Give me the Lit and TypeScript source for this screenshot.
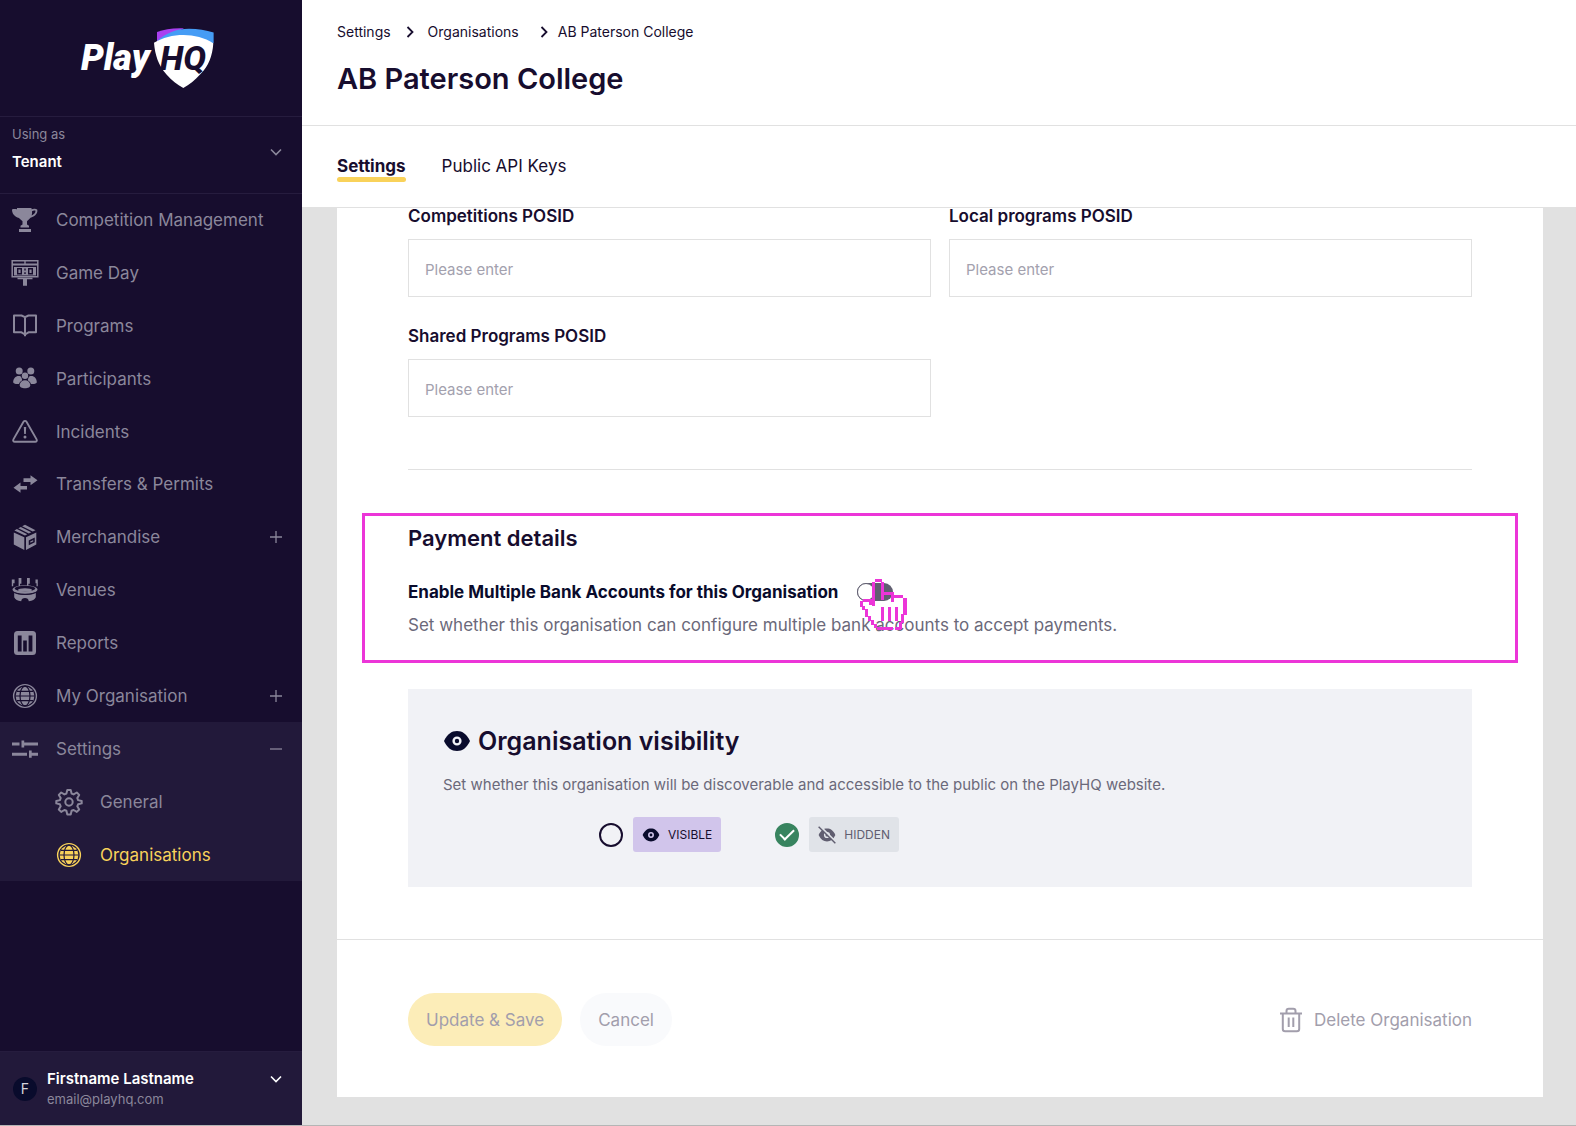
import { LitElement, html, svg, css, nothing, type TemplateResult } from 'lit';
import { customElement, property } from 'lit/decorators.js';
import { classMap } from 'lit/directives/class-map.js';

const globe = svg`
  <circle cx="14" cy="14" r="11.4" fill="none" stroke="currentColor" stroke-width="1.4"/>
  <circle cx="14" cy="14" r="9.4" fill="currentColor"/>
  <g fill="none" stroke="var(--icon-gap)" stroke-width="1.2">
    <ellipse cx="14" cy="14" rx="5" ry="9.8"/>
    <path d="M4 14h20M6 9.4h16M6 18.6h16"/>
  </g>`;

const icons: Record<string, TemplateResult> = {
  trophy: svg`
    <path fill="currentColor" d="M6 2h14.5v1.2c2-.9 4.500-.6 5.700.3.900 3-1.200 6.500-6.700 8.300-1.300 1.600-2.700 2.500-3.500 3.500v3.200l2 1.200v1.800H9.500v-1.800l2-1.200v-3.200c-.9-1.300-2.200-2-3.500-3.300C3.500 10.500.9 7.500 1 3.400c1.500-.7 3-.6 5-.2z"/>
    <path fill="var(--icon-gap)" d="M21 5.200c1.400-.8 2.700-.9 3.500-.4 0 2-1.400 3.600-3.900 4.700.5-1.200.6-2.600.4-4.300z"/>
    <path fill="currentColor" d="M8 23h12v3H8z"/>`,
  scoreboard: svg`
    <path fill="none" stroke="currentColor" stroke-width="1.500" d="M1.200 1.800h25.600v16H1.200z"/>
    <path fill="currentColor" d="M1 4.600h26v2H1zM13.300 2h1.400v4h-1.400zM3 8h22v8.400H3zM6.500 18.800h15v1.500H16v6.400h-4v-6.400H6.500z"/>
    <g fill="none" stroke="var(--icon-gap)" stroke-width="1.400">
      <path d="M6.700 9.800h3.600v5H6.700zM17.700 9.800h3.600v5h-3.600zM14 9.600v1.800M14 13.200V15"/>
    </g>`,
  book: svg`
    <path fill="none" stroke="currentColor" stroke-width="2" stroke-linejoin="round" d="M3 3.500h7.500L14 5.200l3.500-1.700H25v16.800h-7.500L14 22.500l-3.500-2.200H3zM14 5.200v19"/>`,
  people: svg`
    <g fill="currentColor">
      <circle cx="8.200" cy="6" r="3.500"/><circle cx="19.800" cy="6" r="3.500"/>
      <path d="M2.200 17.200c0-3.600 2.400-6.200 5.400-6.200 1.700 0 2.300.4 2.700 1.300.6 2 1.400 2.700.3 3.500-1.500 1-2.200 1.900-2.500 3.100-3.400.2-5.900-.2-5.900-1.700zM25.800 17.200c0-3.600-2.400-6.200-5.400-6.200-1.700 0-2.300.4-2.700 1.300-.6 2-1.400 2.700-.3 3.500 1.500 1 2.200 1.900 2.500 3.100 3.400.2 5.900-.2 5.900-1.700z"/>
      <circle cx="14" cy="10.800" r="3.200"/>
      <path d="M8.700 20c.4-3.200 2.500-4.800 5.300-4.800s4.900 1.600 5.300 4.800c.3 2-2.300 3.300-5.300 3.300S8.400 22 8.700 20z"/>
    </g>`,
  alert: svg`
    <path fill="none" stroke="currentColor" stroke-width="1.900" stroke-linejoin="round" d="M12.500 3.800 2.400 21.400c-.7 1.300 0 2.400 1.400 2.400h20.400c1.400 0 2.100-1.100 1.400-2.400L15.500 3.800c-.8-1.300-2.200-1.300-3 0z"/>
    <path fill="currentColor" d="M12.800 9h2.400l-.4 7h-1.600z"/><circle cx="14" cy="19" r="1.500" fill="currentColor"/>`,
  transfer: svg`
    <path fill="currentColor" d="M12.500 8.300h7V5.200l7 5-7 5v-3.100h-7zM16 15.900v3.600H9.500v3.200l-7-5 7-5.200v3.400z"/>`,
  box: svg`
    <g fill="currentColor">
      <path d="m2.800 9.500 10.500 4.800V27L2.800 21.500zM15 14.300l10.300-4.800v12L15 27z"/>
      <path d="m14 1.800 10.500 5.400-2.700 1.300-10.700-5.300zM9.800 4l10.500 5.200-2.500 1.300L7.300 5.200zM5.900 6l10.400 5.300L14 12.600 3.400 7.400z"/>
    </g>
    <path fill="none" stroke="var(--icon-gap)" stroke-width="1.500" d="m18.500 18 4.500-2.200v3l-4.500 2.200z"/>`,
  stadium: svg`
    <g fill="currentColor">
      <path d="M.8 3.500h2.800v3.700H2.200v3H.8zM7.600 2h2.800v5.800H9v3H7.600zM16 2h2.800v5.800h-1.400v3H16zM24.500 3.500h2.300v6.700h-1.300V7.200h-1z"/>
      <path d="M3.200 16.500c2.200 1.500 6 2.300 10.800 2.300s8.600-.8 10.800-2.300v4.700c-1 2.300-3.300 3.600-7 4-.3-2-1.600-3.200-3.800-3.200s-3.500 1.200-3.800 3.200c-3.700-.4-6-1.700-7-4z"/>
      <ellipse cx="14" cy="13.500" rx="12.500" ry="4.300"/>
    </g>
    <ellipse cx="14" cy="12.600" rx="10.400" ry="2.800" fill="var(--icon-gap)"/>
    <ellipse cx="14" cy="14" rx="7" ry="1.700" fill="currentColor"/>
    <path fill="none" stroke="var(--icon-gap)" stroke-width=".8" d="M2.500 16.200c2.600 1.600 6.500 2.300 11.500 2.300s8.900-.7 11.500-2.300"/>`,
  chart: svg`
    <rect x="3" y="2" width="22" height="24" rx="3.500" fill="currentColor"/>
    <path fill="var(--icon-gap)" d="M6.800 6.500h3.800v16H6.800zM12.200 11.500h3.600v11h-3.600zM17.600 6.500h3.800v16h-3.800z"/>`,
  globe,
  sliders: svg`
    <path fill="currentColor" d="M1 7.500h7.500v3H1zM10.500 5.400h2.700v2.100H27v3H13.200v2h-2.700zM1 17.700h15v3H1zM18 15.600h2.700v2.100H27v3h-6.300v2H18z"/>`,
  gear: svg`
    <path fill="none" stroke="currentColor" stroke-width="2" stroke-linejoin="round" d="M12.300 2h3.400l.9 3.600 2 .8 3.200-1.900 2.400 2.400-1.900 3.200.8 2 3.600.9v2.400l-3.600.9-.8 2 1.900 3.200-2.400 2.400-3.200-1.900-2 .8-.9 3.600h-3.400l-.9-3.600-2-.8-3.200 1.900-2.400-2.400 1.900-3.200-.8-2-3.600-.9v-2.400l3.600-.9.8-2-1.900-3.200 2.400-2.400 3.200 1.900 2-.8z"/>
    <circle cx="14" cy="14" r="3.700" fill="none" stroke="currentColor" stroke-width="2"/>`,
  down: svg`<path fill="none" stroke="currentColor" stroke-width="1.600" d="m9 11.500 5 5 5-5"/>`,
  right: svg`<path fill="none" stroke="currentColor" stroke-width="1.800" d="m11.500 9 5 5-5 5"/>`,
  plus: svg`<path fill="none" stroke="currentColor" stroke-width="1.300" d="M8 14h12M14 8v12"/>`,
  minus: svg`<path fill="none" stroke="currentColor" stroke-width="1.300" d="M8 14h12"/>`,
  eye: svg`
    <path fill="currentColor" d="M14 4c5.500 0 9.600 3 13 10-3.400 7-7.500 10-13 10S4.400 21 1 14C4.400 7 8.500 4 14 4z"/>
    <circle cx="14" cy="14" r="3.400" fill="none" stroke="var(--icon-gap)" stroke-width="2.400"/>`,
  eyeOff: svg`
    <path fill="currentColor" d="M14 4c5.500 0 9.600 3 13 10-3.400 7-7.500 10-13 10S4.400 21 1 14C4.400 7 8.500 4 14 4z"/>
    <circle cx="14" cy="14" r="3.600" fill="none" stroke="var(--icon-gap)" stroke-width="2.400"/>
    <path fill="none" stroke="var(--icon-gap)" stroke-width="3" d="M3 0l25 25"/>
    <path fill="none" stroke="currentColor" stroke-width="2.200" d="M1 1l26 26"/>`,
  bin: svg`
    <g fill="none" stroke="currentColor" stroke-width="2" stroke-linejoin="round">
      <path d="M3 7.500h22M5.800 7.500V23c0 1.500.8 2.300 2.300 2.300h11.800c1.500 0 2.300-.8 2.300-2.300V7.500M9.500 7V5c0-1.500.8-2.300 2.300-2.300h4.400c1.500 0 2.300.8 2.300 2.300v2M11.700 11.500V21M16.300 11.500V21"/>
    </g>`,
};

@customElement('ui-icon')
class UiIcon extends LitElement {
  static styles = css`
    :host { display: inline-flex; flex: none; width: 28px; height: 28px; }
    svg { display: block; width: 100%; height: 100%; }
  `;
  @property() name = '';
  render() {
    return html`<svg viewBox="0 0 28 28" aria-hidden="true">${icons[this.name]}</svg>`;
  }
}

interface NavItem { label: string; icon: string; expands?: boolean }

const NAV: NavItem[] = [
  { label: 'Competition Management', icon: 'trophy' },
  { label: 'Game Day', icon: 'scoreboard' },
  { label: 'Programs', icon: 'book' },
  { label: 'Participants', icon: 'people' },
  { label: 'Incidents', icon: 'alert' },
  { label: 'Transfers & Permits', icon: 'transfer' },
  { label: 'Merchandise', icon: 'box', expands: true },
  { label: 'Venues', icon: 'stadium' },
  { label: 'Reports', icon: 'chart' },
  { label: 'My Organisation', icon: 'globe', expands: true },
];

@customElement('side-bar')
class SideBar extends LitElement {
  static styles = css`
    :host {
      --icon-gap: #170d2e;
      display: flex; flex-direction: column;
      background: #170d2e; color: #8b879b;
      font-size: 17px; line-height: 24px;
    }
    button { font: inherit; color: inherit; background: none; border: 0; margin: 0; text-align: left; cursor: pointer; }
    a { color: inherit; text-decoration: none; }
    ul { list-style: none; margin: 0; padding: 0; }
    .logo { display: flex; justify-content: center; padding: 22px 6px 22px 0; border-bottom: 1px solid #261c3e; }
    .logo svg { display: block; width: 144px; height: 72px; }
    .play { font: italic 900 36px Roboto, "Liberation Sans", sans-serif; fill: #fff; }
    .hq { font: italic 800 34px Roboto, "Liberation Sans", sans-serif; fill: #170d2e; }
    .tenant {
      display: flex; align-items: center; width: 100%; padding: 5px 12px 19px;
      border-bottom: 1px solid #261c3e; justify-content: space-between;
    }
    .tenant-text { display: grid; gap: 4px; }
    .small { font-size: 13px; }
    .strong { font-size: 15px; font-weight: 600; color: #fff; }
    .tenant ui-icon { margin-top: 8px; }
    .main { display: grid; grid-template-rows: repeat(10, 1fr); height: 528px; }
    .row { display: flex; align-items: center; box-sizing: border-box; width: 100%; height: 100%; padding: 0 12px 0 11px; gap: 17px; }
    .grow { flex: 1; }
    .group { background: #22193a; --icon-gap: #22193a; }
    .group li { height: 53px; }
    .sub { padding-left: 55px; }
    .current { color: #f9d25a; }
    .user {
      display: flex; align-items: center; margin-top: auto; padding: 17px 12px 16px 13px; gap: 10px;
      background: #22193a; border-top: 1px solid #261c3e; width: 100%;
    }
    .avatar {
      display: grid; place-items: center; flex: none; width: 24px; height: 24px;
      border-radius: 50%; background: #090b2c; color: #d5d3dc; font-size: 14px;
    }
    .who { display: grid; flex: 1; line-height: 20px; }
    .user ui-icon { color: #fff; align-self: flex-start; margin-top: -4px; }
  `;

  render() {
    return html`
      <div class="logo">
        <svg viewBox="0 0 144 72" role="img" aria-label="PlayHQ">
          <path fill="#a93ff0" d="M81 10C88 7 97 5.800 108 6.200L97 12 81 19.500z"/>
          <path fill="#459cf5" d="M81 19C90 11 100 6.700 113 6.700 122 6.700 130 8 137.600 10.500V21z"/>
          <path fill="#fff" d="M78 20.700C95 10.500 120 10 137.300 21.200 136.500 34 132.500 44 124.500 52 118.500 58.500 113.500 62.500 107.300 66 101 62.500 96 58.500 90.500 52.500 82.500 43.500 79 33 78 20.700z"/>
          <text class="play" x="5" y="48">Play</text>
          <text class="hq" x="84" y="48">HQ</text>
        </svg>
      </div>
      <button class="tenant">
        <span class="tenant-text"><span class="small">Using as</span><span class="strong">Tenant</span></span>
        <ui-icon name="down"></ui-icon>
      </button>
      <nav aria-label="Main">
        <ul class="main">
          ${NAV.map((n) => html`<li>${n.expands
            ? html`<button class="row" aria-expanded="false"><ui-icon name=${n.icon}></ui-icon><span class="grow">${n.label}</span><ui-icon name="plus"></ui-icon></button>`
            : html`<a class="row" href="#"><ui-icon name=${n.icon}></ui-icon><span>${n.label}</span></a>`}</li>`)}
        </ul>
        <ul class="group">
          <li><button class="row" aria-expanded="true"><ui-icon name="sliders"></ui-icon><span class="grow">Settings</span><ui-icon name="minus"></ui-icon></button></li>
          <li><a class="row sub" href="#"><ui-icon name="gear"></ui-icon><span>General</span></a></li>
          <li><a class="row sub current" href="#" aria-current="page"><ui-icon name="globe"></ui-icon><span>Organisations</span></a></li>
        </ul>
      </nav>
      <button class="user">
        <span class="avatar">F</span>
        <span class="who"><span class="strong">Firstname Lastname</span><span class="small">email@playhq.com</span></span>
        <ui-icon name="down"></ui-icon>
      </button>`;
  }
}

@customElement('pos-field')
class PosField extends LitElement {
  static styles = css`
    :host { display: grid; gap: 15px; }
    label { font-size: 17px; line-height: 16px; font-weight: 600; color: #170d2e; }
    input {
      box-sizing: border-box; width: 100%; height: 58px; padding: 2px 16px 0; margin: 0;
      border: 1px solid #e1e1e1; background: #fff; font: 15px Inter, sans-serif; color: #170d2e; border-radius: 0;
    }
    input::placeholder { color: #a3a1ae; opacity: 1; }
  `;
  @property() label = '';
  render() {
    return html`<label for="field">${this.label}</label><input id="field" type="text" placeholder="Please enter">`;
  }
}

@customElement('app-root')
class AppRoot extends LitElement {
  static styles = css`
    :host {
      display: grid; grid-template-columns: 302px minmax(0, 1fr); box-sizing: border-box;
      min-height: 100vh; border-bottom: 1px solid #b5b5b5;
      font-family: Inter, "Liberation Sans", sans-serif; color: #170d2e; background: #fff;
    }
    a { color: inherit; text-decoration: none; }
    button { font: inherit; border: 0; margin: 0; cursor: pointer; }
    h1, h2, p { margin: 0; }
    .page { display: flex; flex-direction: column; }
    .head { padding: 22px 35px 28px; border-bottom: 1px solid #e1e1e1; }
    .crumbs { display: flex; font-size: 14px; line-height: 20px; list-style: none; margin: 0; padding: 0; }
    .crumbs li { display: flex; align-items: center; height: 20px; }
    .crumbs .wide { margin: 0 4px 0 5px; }
    .crumbs .late { margin-left: 11px; }
    h1 { font-size: 29px; line-height: 36px; font-weight: 600; margin-top: 19px; }
    .tabs { display: flex; gap: 36px; padding: 28px 35px 24px; border-bottom: 1px solid #e1e1e1; font-size: 17px; line-height: 24px; }
    .tab { border-bottom: 5px solid transparent; }
    .active { font-weight: 700; position: relative; }
    .active::after { content: ""; position: absolute; left: 0; right: 0; bottom: -4px; height: 5px; border-radius: 3px; background: #f9d25a; }
    .body { flex: 1; background: #e1e1e1; padding: 0 33px 28px 35px; }
    .panel { background: #fff; }
    .content { padding: 0 71px 52px; }
    .fields { display: grid; grid-template-columns: 1fr 1fr; gap: 31px 18px; padding-bottom: 52px; margin-bottom: 43px; border-bottom: 1px solid #e1e1e1; }
    .payment { border: 3px solid #ec35d8; margin: 0 -46px 26px; padding: 8px 43px 23px; }
    .payment h2 { font-size: 22px; line-height: 28px; font-weight: 600; }
    .switch-row { display: flex; align-items: center; gap: 19px; margin-top: 28px; font-size: 17px; line-height: 24px; font-weight: 700; color: #090b2c; }
    .switch-box { position: relative; display: flex; }
    .switch { appearance: none; position: relative; margin: 0; width: 36px; height: 18px; border-radius: 9px; background: #605e70; }
    .switch::before { content: ""; position: absolute; left: 0; top: 0; box-sizing: border-box; width: 18px; height: 18px; border-radius: 50%; background: #fff; border: 1px solid #605e70; }
    .pointer { position: absolute; left: -7px; top: -12px; width: 70px; height: 70px; pointer-events: none; }
    .hint { font-size: 17px; line-height: 24px; margin-top: 9px; color: #6b697a; }
    .visibility { --icon-gap: #f1f2f6; background: #f1f2f6; padding: 36px 35px 35px; }
    .visibility h2 { display: flex; align-items: center; gap: 7px; font-size: 25px; line-height: 32px; font-weight: 600; }
    .visibility h2 ui-icon { color: #090b2c; }
    .visibility p { font-size: 15px; line-height: 20px; margin-top: 18px; color: #6b697a; }
    .choices { display: flex; gap: 54px; margin: 22px 0 0; padding: 0 0 0 156px; border: 0; }
    .choice { display: flex; align-items: center; gap: 10px; }
    .radio { appearance: none; box-sizing: border-box; position: relative; width: 24px; height: 24px; margin: 0; border: 2px solid #170d2e; border-radius: 50%; }
    .radio:checked { border-color: #38845f; background: #38845f; }
    .radio:checked::after { content: ""; position: absolute; box-sizing: border-box; left: 3px; top: 4px; width: 14px; height: 8px; border: solid #fff; border-width: 0 0 2px 2px; transform: rotate(-45deg); }
    .chip { display: flex; align-items: center; gap: 8px; height: 35px; padding: 0 9px; border-radius: 3px; font-size: 12px; }
    .chip ui-icon { width: 18px; height: 18px; }
    .visible { background: #d1c5eb; --icon-gap: #d1c5eb; }
    .visible ui-icon { color: #090b2c; }
    .hidden { background: #e0e3e8; --icon-gap: #e0e3e8; color: #605e70; }
    .actions { display: flex; align-items: center; gap: 18px; padding: 53px 71px 51px; border-top: 1px solid #e1e1e1; font-size: 17px; line-height: 24px; color: #a29eac; }
    .pill { height: 53px; padding: 0 18px; border-radius: 27px; color: inherit; white-space: nowrap; }
    .save { background: #fcedb8; }
    .cancel { background: #f9fafc; }
    .delete { display: flex; align-items: center; gap: 9px; margin-left: auto; padding: 0; background: none; color: inherit; }
  `;

  render() {
    return html`
      <side-bar></side-bar>
      <main class="page">
        <header class="head">
          <nav aria-label="Breadcrumb">
            <ol class="crumbs">
              <li><a href="#">Settings</a><ui-icon class="wide" name="right"></ui-icon></li>
              <li><a href="#">Organisations</a><ui-icon class="late" name="right"></ui-icon></li>
              <li aria-current="page">AB Paterson College</li>
            </ol>
          </nav>
          <h1>AB Paterson College</h1>
        </header>
        <nav class="tabs" aria-label="Organisation">
          ${['Settings', 'Public API Keys'].map((t, i) => html`
            <a href="#" class=${classMap({ tab: true, active: i === 0 })} aria-current=${i === 0 ? 'page' : nothing}>${t}</a>`)}
        </nav>
        <div class="body">
          <form class="panel" @submit=${(e: Event) => e.preventDefault()}>
            <div class="content">
              <div class="fields">
                <pos-field label="Competitions POSID"></pos-field>
                <pos-field label="Local programs POSID"></pos-field>
                <pos-field label="Shared Programs POSID"></pos-field>
              </div>
              <section class="payment">
                <h2>Payment details</h2>
                <div class="switch-row">
                  <label for="multi">Enable Multiple Bank Accounts for this Organisation</label>
                  <span class="switch-box">
                    <input class="switch" id="multi" type="checkbox" role="switch">
                    <svg class="pointer" viewBox="0 0 70 70" aria-hidden="true">
                      <path fill="#ec35d8" d="M25 8h7v3h-7zM22 11h3v24h-3zM31 11h3v18h-3zM34 21h10v3H34zM41 24h12v3H41zM41 24h3v7h-3zM53 27h4v17h-4zM51 43h3v9h-3zM49 51h3v7h-3zM27 56h16v3H27zM45 56h6v3h-6zM24 53h3v4h-3zM21 49h3v5h-3zM18 45h3v5h-3zM15 38h3v8h-3zM12 35h3v4h-3zM10 30h3v6h-3zM13 28h9v3h-9zM19 31h4v3h-4zM31 36h3v14h-3zM38 36h3v14h-3zM45 36h3v14h-3z"/>
                    </svg>
                  </span>
                </div>
                <p class="hint">Set whether this organisation can configure multiple bank accounts to accept payments.</p>
              </section>
              <section class="visibility">
                <h2><ui-icon name="eye"></ui-icon>Organisation visibility</h2>
                <p>Set whether this organisation will be discoverable and accessible to the public on the PlayHQ website.</p>
                <div class="choices" role="radiogroup" aria-label="Organisation visibility">
                  <label class="choice"><input class="radio" type="radio" name="visibility"><span class="chip visible"><ui-icon name="eye"></ui-icon>VISIBLE</span></label>
                  <label class="choice"><input class="radio" type="radio" name="visibility" checked><span class="chip hidden"><ui-icon name="eyeOff"></ui-icon>HIDDEN</span></label>
                </div>
              </section>
            </div>
            <footer class="actions">
              <button class="pill save">Update &amp; Save</button>
              <button class="pill cancel" type="button">Cancel</button>
              <button class="delete" type="button"><ui-icon name="bin"></ui-icon>Delete Organisation</button>
            </footer>
          </form>
        </div>
      </main>`;
  }
}
